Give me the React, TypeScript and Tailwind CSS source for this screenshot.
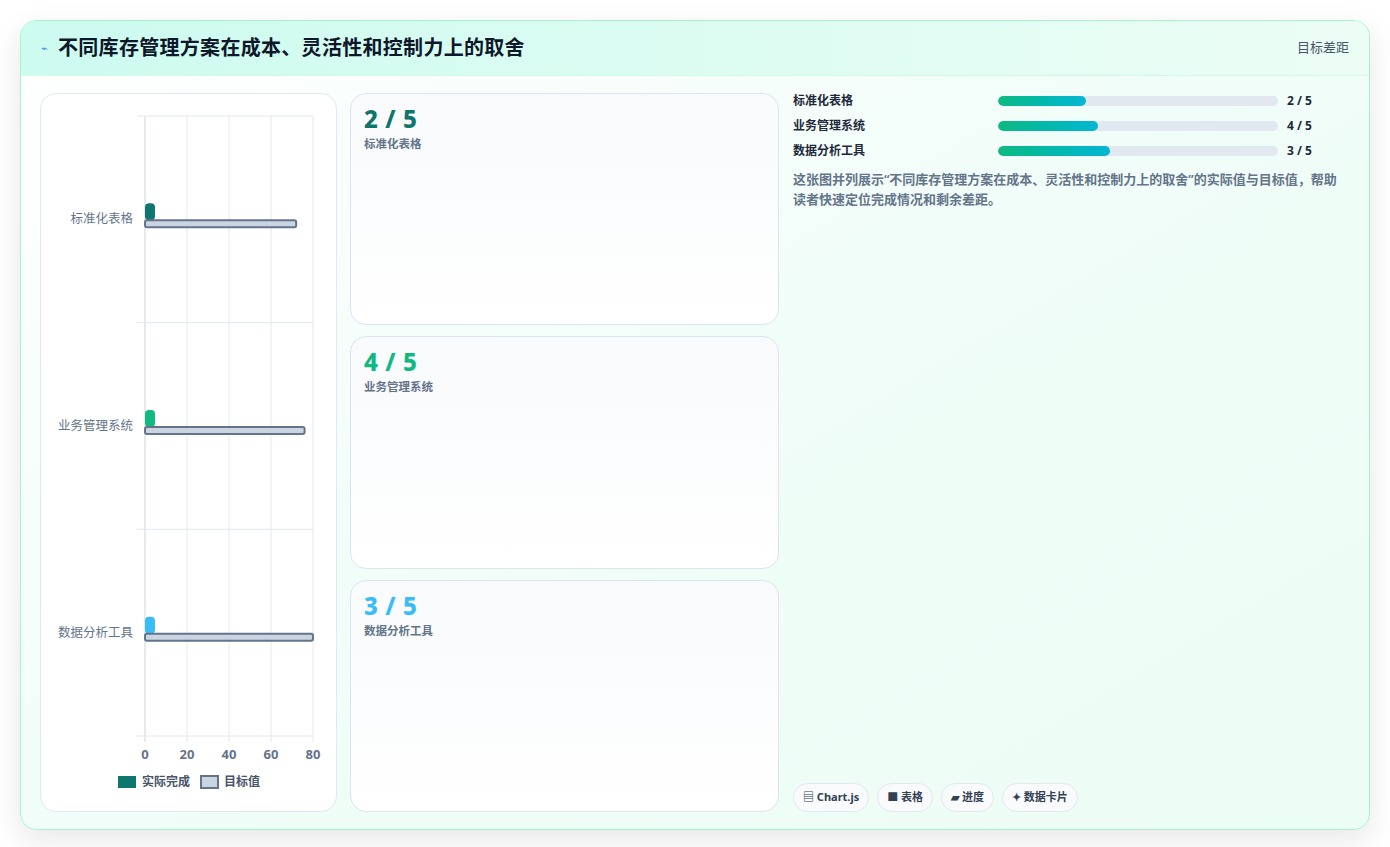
import React from "react";

const F = { fontFamily: '"Noto Sans","Noto Sans CJK SC",sans-serif' };

const cats = [
  { name: "标准化表格", v: "2 / 5", color: "#0f766e", target: 72, fill: 88 },
  { name: "业务管理系统", v: "4 / 5", color: "#10b981", target: 76, fill: 100 },
  { name: "数据分析工具", v: "3 / 5", color: "#38bdf8", target: 80, fill: 112 },
];

function Chart() {
  const x0 = 104, x1 = 272, y0 = 22, y1 = 642;
  const sx = (v: number) => x0 + ((x1 - x0) * v) / 80;
  const band = (y1 - y0) / 3;
  return (
    <svg width="296" height="717" className="block">
      {[0, 20, 40, 60, 80].map((t) => (
        <g key={t}>
          <line x1={sx(t)} x2={sx(t)} y1={y0} y2={y1 + 6} stroke={t === 0 ? "#cbd5e1" : "#e2e8f0"} />
          <text x={sx(t)} y={y1 + 23} textAnchor="middle" fontSize="13" fontWeight="700" fill="#64748b">{t}</text>
        </g>
      ))}
      {[0, 1, 2, 3].map((i) => (
        <line key={i} x1={x0 - 8} x2={x1} y1={y0 + band * i} y2={y0 + band * i} stroke="#e2e8f0" />
      ))}
      {cats.map((c, i) => {
        const cy = y0 + band * i + band / 2;
        return (
          <g key={c.name}>
            <text x={x0 - 12} y={cy + 4} textAnchor="end" fontSize="12.5" fill="#64748b">{c.name}</text>
            <rect x={x0} y={cy - 16} width={10} height={17} rx={4} fill={c.color} />
            <rect x={x0} y={cy + 1} width={sx(c.target) - x0} height={7} rx={2} fill="#cbd5e1" stroke="#64748b" strokeWidth="2" />
          </g>
        );
      })}
      <rect x={77} y={682} width={18} height={12} fill="#0f766e" />
      <text x={101} y={692} fontSize="12" fontWeight="700" fill="#475569">实际完成</text>
      <rect x={160} y={682} width={17} height={12} fill="#cbd5e1" stroke="#64748b" strokeWidth="2" />
      <text x={183} y={692} fontSize="12" fontWeight="700" fill="#475569">目标值</text>
    </svg>
  );
}

export default function App() {
  return (
    <div className="w-[1390px] h-[847px] bg-white p-5" style={F}>
      <div className="h-[810px] rounded-2xl border border-[#a7f3d0] overflow-hidden flex flex-col shadow-[0_10px_30px_rgba(15,23,42,0.10)] bg-gradient-to-br from-white via-[#f0fdf8] to-[#ecfdf5]">
        <div className="h-[55px] shrink-0 flex items-center justify-between px-5 bg-gradient-to-r from-[#ccfbef] to-[#ecfdf5] border-b border-[#d1fae5]">
          <div className="flex items-center gap-[10px]">
            <span className="text-[11px] text-[#3b82f6]">⌁</span>
            <span className="text-[20px] font-bold text-[#0f172a] tracking-[0.3px]">不同库存管理方案在成本、灵活性和控制力上的取舍</span>
          </div>
          <span className="text-[13px] text-[#475569]">目标差距</span>
        </div>
        <div className="flex-1 flex gap-[13px] px-[19px] pt-[17px] pb-[18px]">
          <div className="w-[297px] shrink-0 rounded-2xl border border-[#e2e8f0] bg-white">
            <Chart />
          </div>
          <div className="w-[429px] shrink-0 flex flex-col gap-[11px]">
            {cats.map((c) => (
              <div key={c.name} className="flex-1 rounded-2xl border border-[#dbe5ef] bg-gradient-to-b from-[#f8fafc] to-white px-[13px] pt-[10px]">
                <div className="text-[24px] font-extrabold leading-[30px] tracking-wide" style={{ color: c.color }}>{c.v}</div>
                <div className="text-[11.5px] font-semibold text-[#64748b] mt-[1px]">{c.name}</div>
              </div>
            ))}
          </div>
          <div className="flex-1 flex flex-col pl-[1px]">
            <div className="flex flex-col gap-[9px]">
              {cats.map((c) => (
                <div key={c.name} className="flex items-center h-[16px]">
                  <span className="w-[205px] text-[12px] font-bold text-[#1e293b]">{c.name}</span>
                  <div className="w-[280px] h-[10px] rounded-full bg-[#e2e8f0] overflow-hidden">
                    <div className="h-full rounded-full bg-gradient-to-r from-[#10b981] to-[#06b6d4]" style={{ width: c.fill }} />
                  </div>
                  <span className="ml-[9px] text-[12px] font-bold text-[#1e293b]">{c.v}</span>
                </div>
              ))}
            </div>
            <p className="mt-[10px] text-[13px] leading-[20px] font-semibold text-[#64748b] pr-[10px]">
              这张图并列展示“不同库存管理方案在成本、灵活性和控制力上的取舍”的实际值与目标值，帮助读者快速定位完成情况和剩余差距。
            </p>
            <div className="mt-auto flex gap-2">
              {["▤ Chart.js", "■ 表格", "▰ 进度", "✦ 数据卡片"].map((t) => (
                <span key={t} className="h-[29px] px-[9px] flex items-center rounded-full border border-[#e2e8f0] bg-[#f8fafc] text-[11px] font-bold text-[#334155]">{t}</span>
              ))}
            </div>
          </div>
        </div>
      </div>
    </div>
  );
}
